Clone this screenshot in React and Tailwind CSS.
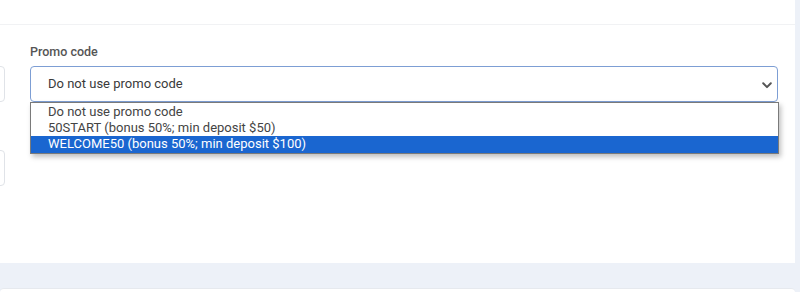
import { useState } from 'react';

const options = [
  'Do not use promo code',
  '50START (bonus 50%; min deposit $50)',
  'WELCOME50 (bonus 50%; min deposit $100)',
];

function Chevron() {
  return (
    <svg width="10" height="7" viewBox="0 0 10 7" className="mt-[2px] text-[#555]">
      <path d="M1.2 1.3 L5 5.1 L8.8 1.3" fill="none" stroke="currentColor" strokeWidth="2" strokeLinecap="round" strokeLinejoin="round" />
    </svg>
  );
}

export default function App() {
  const [active] = useState(2);

  return (
    <div className="h-[292px] overflow-hidden bg-[#edf1f8] font-['Roboto',sans-serif]">
      <div className="w-[795px] bg-white">
        <div className="h-[25px] border-b border-[#f1f2f4]" />
        <div className="flex h-[238px] pt-[19px]">
          {/* left column, mostly cut off */}
          <div className="-ml-[190px] mr-[25px] flex w-[195px] shrink-0 flex-col gap-[48px] pt-[22px]">
            <div className="h-[36px] rounded-[4px] border border-[#e0e3e8] bg-white" />
            <div className="h-[36px] rounded-[4px] border border-[#e0e3e8] bg-white" />
          </div>

          <div className="w-[748px]">
            <label className="block text-[12.5px] font-medium leading-[16px] text-[#555]">Promo code</label>
            <div className="relative mt-[6px]">
              <div className="flex h-[36px] items-center justify-between rounded-[4px] border border-[#7d9ed4] bg-white pl-[17px] pr-[5px] text-[13px] text-[#3a3a3a]">
                <span>Do not use promo code</span>
                <Chevron />
              </div>
              <ul className="absolute left-0 top-[36px] z-10 w-[749px] border border-[#7a7a7a] bg-white pt-[1px] text-[13px] leading-[16px] text-[#333] shadow-[2px_3px_5px_rgba(0,0,0,0.25)]">
                {options.map((o, i) => (
                  <li
                    key={o}
                    className={
                      i === active
                        ? 'bg-[#1a66d0] pl-[17px] pb-[1px] text-white'
                        : 'pl-[17px] text-[#444]'
                    }
                  >
                    {o}
                  </li>
                ))}
              </ul>
            </div>
          </div>
        </div>
      </div>
      <div className="mt-[25px] h-[10px] w-[795px] rounded-t-[4px] border-t border-[#e6e9ee] bg-white" />
    </div>
  );
}
